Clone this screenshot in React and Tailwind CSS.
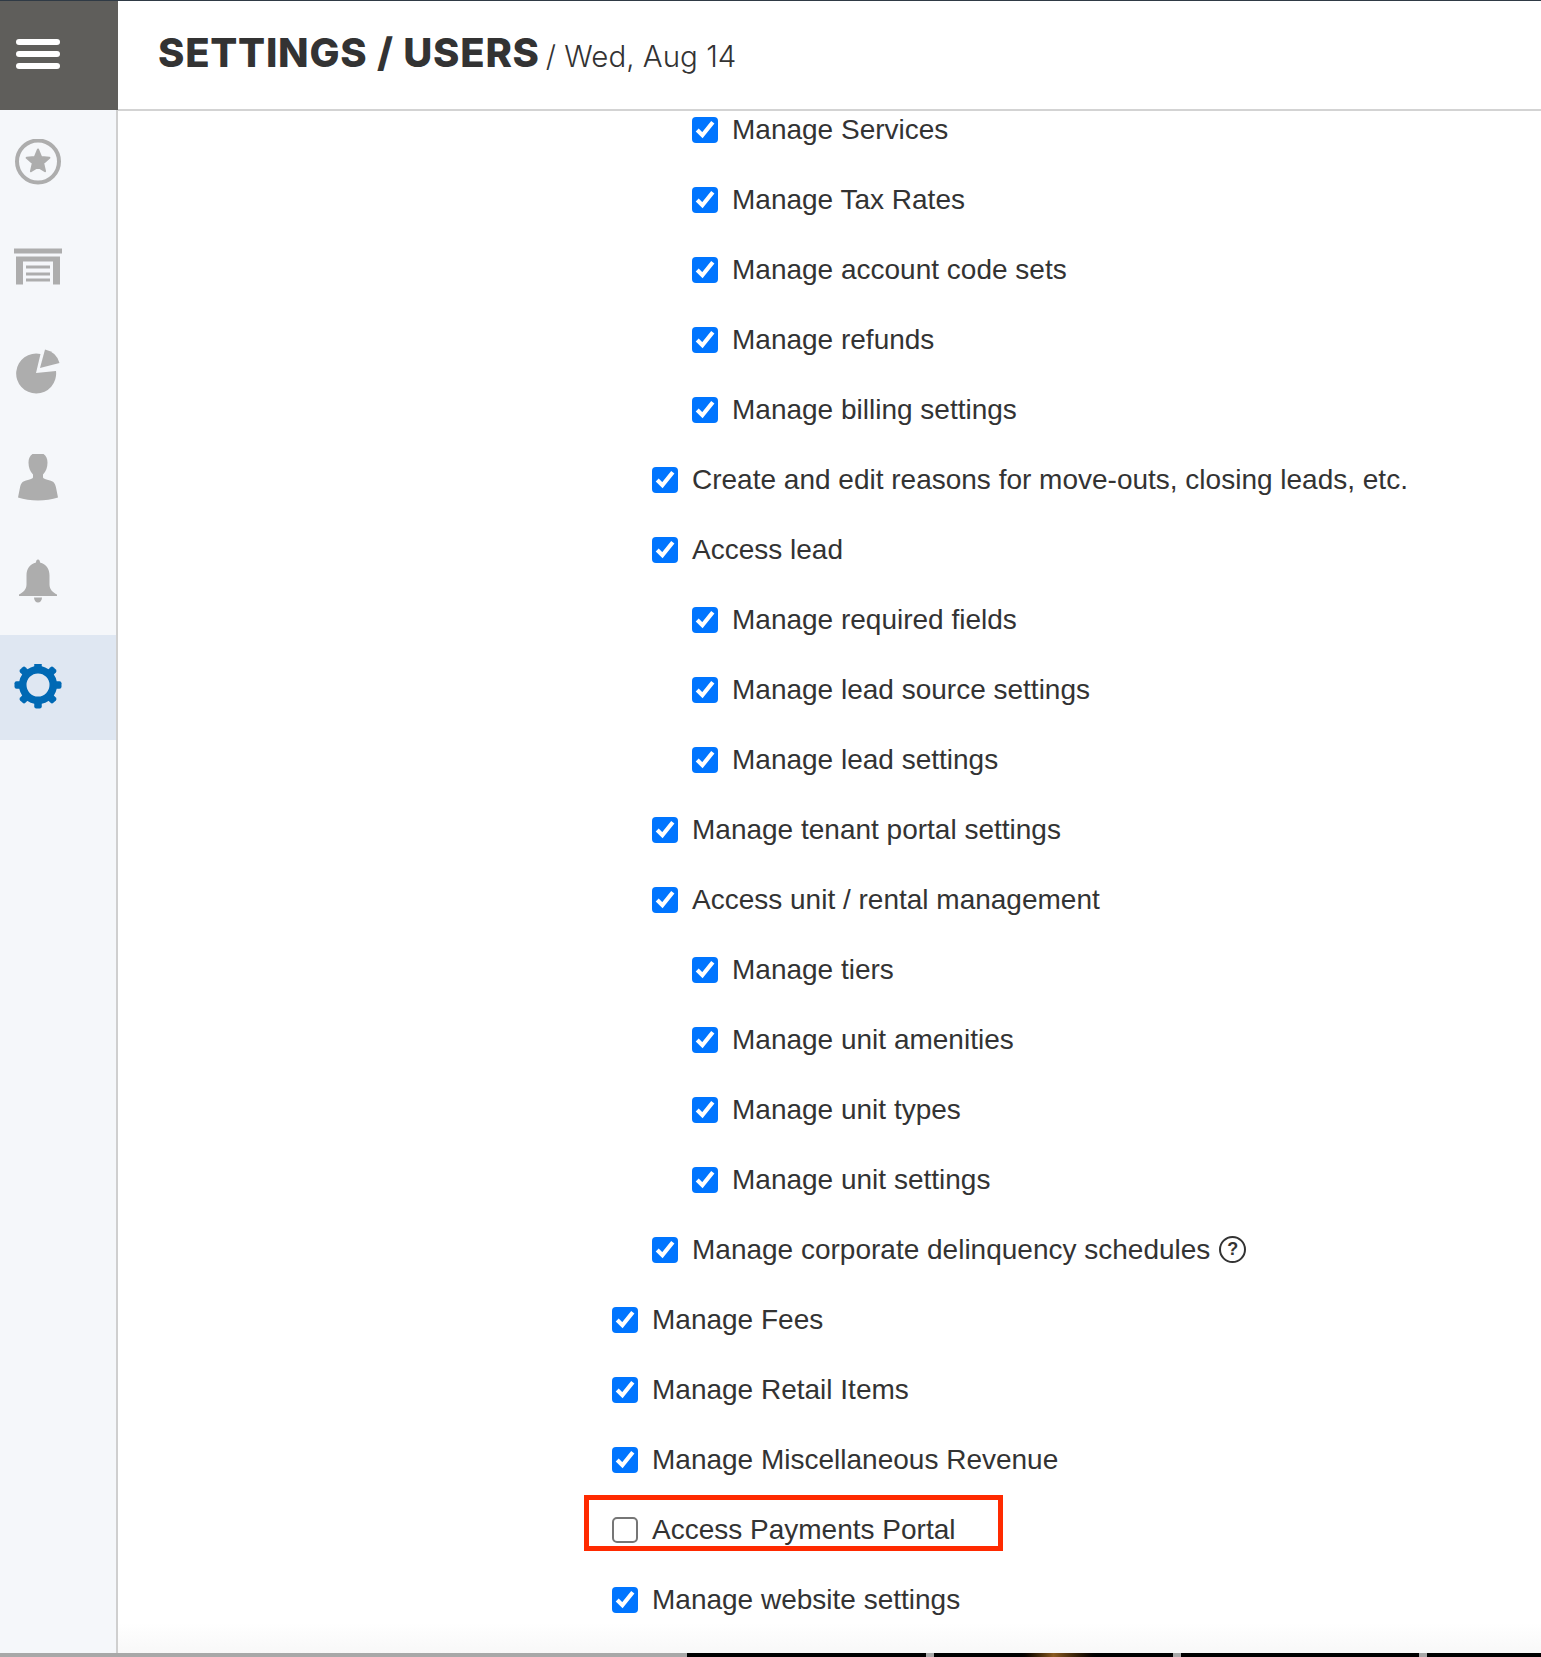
const permissions = [
  { label: 'Manage Services', level: 3 },
  { label: 'Manage Tax Rates', level: 3 },
  { label: 'Manage account code sets', level: 3 },
  { label: 'Manage refunds', level: 3 },
  { label: 'Manage billing settings', level: 3 },
  { label: 'Create and edit reasons for move-outs, closing leads, etc.', level: 2 },
  { label: 'Access lead', level: 2 },
  { label: 'Manage required fields', level: 3 },
  { label: 'Manage lead source settings', level: 3 },
  { label: 'Manage lead settings', level: 3 },
  { label: 'Manage tenant portal settings', level: 2 },
  { label: 'Access unit / rental management', level: 2 },
  { label: 'Manage tiers', level: 3 },
  { label: 'Manage unit amenities', level: 3 },
  { label: 'Manage unit types', level: 3 },
  { label: 'Manage unit settings', level: 3 },
  { label: 'Manage corporate delinquency schedules', level: 2, help: true },
  { label: 'Manage Fees', level: 1 },
  { label: 'Manage Retail Items', level: 1 },
  { label: 'Manage Miscellaneous Revenue', level: 1 },
  { label: 'Access Payments Portal', level: 1, off: true, flagged: true },
  { label: 'Manage website settings', level: 1 },
]

const indent = { 1: 'pl-0', 2: 'pl-10', 3: 'pl-20' }

function NavIcon({ cy, children }) {
  // viewBox follows page coordinates so the paths stay easy to compare
  return (
    <svg width="48" height="48" viewBox={`14 ${cy - 24} 48 48`} className="text-[#adadad]" fill="currentColor">
      {children}
    </svg>
  )
}

function PermissionRow({ item }) {
  return (
    <div className={indent[item.level]}>
      <label className="relative flex h-[26px] items-center gap-[14px] text-[28px] leading-none text-[#333]">
        {/* zoom keeps the native box's 2x corner radius and tick */}
        <input
          type="checkbox"
          defaultChecked={!item.off}
          className="m-0 h-[13px] w-[13px] shrink-0 accent-[#0075ff] [zoom:2]"
        />
        <span>{item.label}</span>
        {item.help && (
          <span className="-ml-[5px] mb-[2px] flex h-[27px] w-[27px] items-center justify-center rounded-full border-2 border-[#333] text-[18px] font-bold">
            ?
          </span>
        )}
        {item.flagged && (
          <div className="absolute -left-7 -top-[22px] h-[56px] w-[419px] border-[5px] border-[#ff2a00]"></div>
        )}
      </label>
    </div>
  )
}

export default function App() {
  return (
    <div className="flex h-[1657px] w-full flex-col overflow-hidden bg-white font-['Liberation_Sans',sans-serif]">
      <div className="h-px shrink-0 bg-[#2f3a45]"></div>

      {/* Header */}
      <header className="flex h-[110px] shrink-0">
        <div className="flex w-[118px] shrink-0 flex-col gap-[6px] bg-[#5f5e5b] pl-4 pt-[38px]">
          <div className="h-[6px] w-11 rounded-sm bg-white"></div>
          <div className="h-[6px] w-11 rounded-sm bg-white"></div>
          <div className="h-[6px] w-11 rounded-sm bg-white"></div>
        </div>
        <div className="flex flex-1 items-baseline gap-[6px] border-b-2 border-[#d3d3d3] pl-10 pt-[32px] font-['Inter',sans-serif] text-[#333]">
          <h1 className="text-[40px] font-extrabold leading-none tracking-[0.75px]">SETTINGS / USERS</h1>
          <span className="text-[29.5px] font-light leading-none">/ Wed, Aug 14</span>
        </div>
      </header>

      <div className="flex min-h-0 flex-1">
        {/* Sidebar */}
        <nav className="relative -mt-px h-[1543px] w-[118px] shrink-0 border-r-2 border-[#cfcfcf] bg-[#f5f7fa]">
          <div className="flex h-[105px] items-center pl-[14px]">
            <NavIcon cy={162.5}>
              <circle cx="38" cy="161" r="21" fill="none" stroke="currentColor" strokeWidth="4" />
              <polygon
                points="38,149 41.2,156.55 49.4,157.3 43.2,162.7 45.05,170.7 38,166.5 30.95,170.7 32.8,162.7 26.6,157.3 34.8,156.55"
                stroke="currentColor"
                strokeWidth="2"
                strokeLinejoin="round"
              />
            </NavIcon>
          </div>
          <div className="flex h-[105px] items-center pl-[14px]">
            <NavIcon cy={267.5}>
              <path d="M14 248h48v5H14zM16 256h44v5H16zM16 256h7v28h-7zM53 256h7v28h-7zM26 265h24v3H26zM26 272h24v3H26zM26 278h24v3H26z" />
            </NavIcon>
          </div>
          <div className="flex h-[105px] items-center pl-[14px]">
            <NavIcon cy={372.5}>
              <path d="M36 372.5L40.5 353.5A20 20 0 1 0 56 370.5Z" />
              <path d="M40 367.5L45 349A19 19 0 0 1 59.5 362.5Z" />
            </NavIcon>
          </div>
          <div className="flex h-[105px] items-center pl-[14px]">
            <NavIcon cy={477.5}>
              <path d="M38 452C32 452 28.5 456 28.5 462C28.5 467 30 471 33 474V477C33 478 30 479 26 480C22 481 21 483 20 487L18 497C24 499 31 500 38 500C45 500 52 499 58 497L56 487C55 483 54 481 50 480C46 479 43 478 43 477V474C46 471 47.5 467 47.5 462C47.5 456 44 452 38 452Z" />
            </NavIcon>
          </div>
          <div className="flex h-[105px] items-center pl-[14px]">
            <NavIcon cy={582.5}>
              <path d="M38 559C39.5 559 40 560.5 40 562C46 563.5 49.5 568 49.5 575V584C49.5 589 53 592 57 594V595.5H19V594C23 592 26.5 589 26.5 584V575C26.5 568 30 563.5 36 562C36 560.5 36.5 559 38 559Z" />
              <path d="M34 597H42C42 600 40 602 38 602C36 602 34 600 34 597Z" />
            </NavIcon>
          </div>
          <div className="flex h-[105px] items-center bg-[#dfe7f2] pl-[14px]">
            <svg width="48" height="48" viewBox="14 664 48 48" fill="#0069b4">
              <circle cx="38" cy="685" r="15.25" fill="none" stroke="#0069b4" strokeWidth="7.5" />
              {[0, 45, 90, 135, 180, 225, 270, 315].map((deg) => (
                <rect key={deg} x="34.25" y="661.5" width="7.5" height="8" rx="2" transform={`rotate(${deg} 38 685)`} />
              ))}
            </svg>
          </div>
        </nav>

        {/* Permission list */}
        <main className="flex min-w-0 flex-1 flex-col">
          <div className="flex flex-col gap-[44px] pl-[494px] pt-[6px]">
            {permissions.map((item) => (
              <PermissionRow key={item.label} item={item} />
            ))}
          </div>
          <div className="mt-auto h-[30px] bg-gradient-to-b from-white to-[#f8f8f8]"></div>
        </main>
      </div>

      {/* Strip of the page behind the window */}
      <div className="flex h-1 shrink-0 bg-[#a8a8a8]">
        <div className="ml-[687px] w-[239px] bg-black"></div>
        <div className="ml-2 w-[239px] bg-gradient-to-r from-black from-35% via-[#8a5a20] to-black to-70%"></div>
        <div className="ml-2 w-[238px] bg-black"></div>
        <div className="ml-2 flex-1 bg-black"></div>
      </div>
    </div>
  )
}
